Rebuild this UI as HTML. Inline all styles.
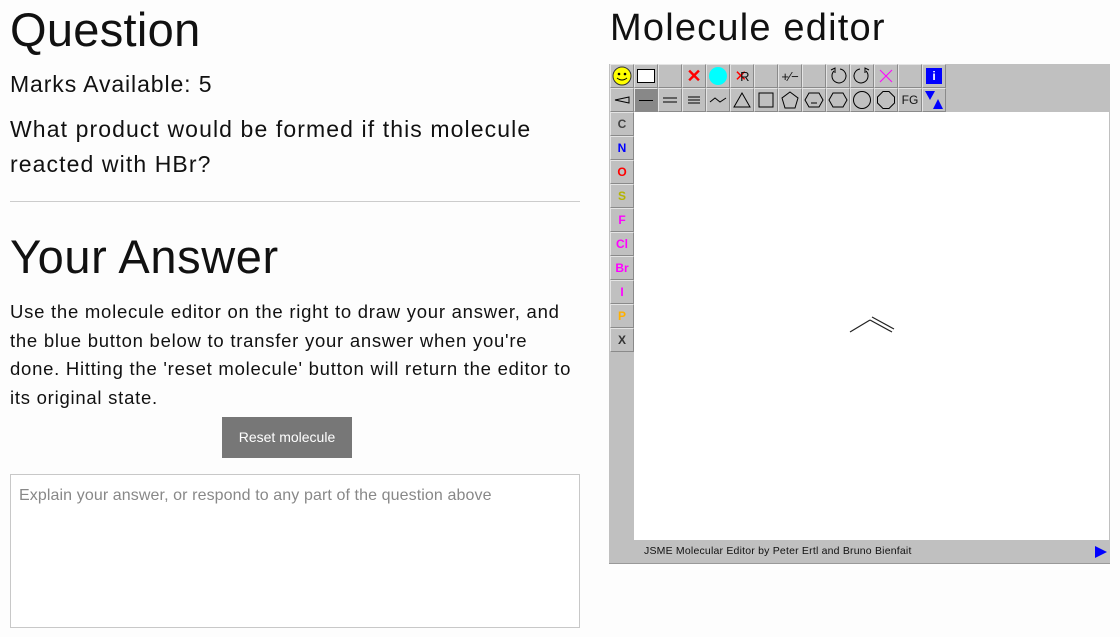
<!DOCTYPE html>
<html><head><meta charset="utf-8"><style>
body{margin:0;width:1120px;height:637px;background:#fdfdfd;font-family:"Liberation Sans",sans-serif;color:#111;position:relative;overflow:hidden}
.a{position:absolute;white-space:nowrap}
.b{position:absolute;width:22px;height:22px;background:#c0c0c0;border-top:1px solid #e4e4e4;border-left:1px solid #e4e4e4;border-right:1px solid #8a8a8a;border-bottom:1px solid #8a8a8a;box-sizing:content-box;display:flex;align-items:center;justify-content:center;font:bold 12px "Liberation Sans",sans-serif}
</style></head><body>
<div class="a" style="left:10px;top:2px;font-size:47px;letter-spacing:0.3px">Question</div>
<div class="a" style="left:10px;top:71px;font-size:23px;letter-spacing:0.9px">Marks Available: 5</div>
<div class="a" style="left:10px;top:112px;font-size:23px;line-height:35px;letter-spacing:1.1px">What product would be formed if this molecule<br>reacted with HBr?</div>
<div class="a" style="left:10px;top:201px;width:570px;height:1px;background:#ccc"></div>
<div class="a" style="left:10px;top:229px;font-size:47px;letter-spacing:0.6px">Your Answer</div>
<div class="a" style="left:10px;top:298px;font-size:18.5px;line-height:28.5px;letter-spacing:0.75px">Use the molecule editor on the right to draw your answer, and<br>the blue button below to transfer your answer when you're<br>done. Hitting the 'reset molecule' button will return the editor to<br>its original state.</div>
<div class="a" style="left:222px;top:417px;width:130px;height:41px;background:#777;color:#fff;font-size:14px;line-height:41px;text-align:center">Reset molecule</div>
<div class="a" style="left:10px;top:474px;width:568px;height:152px;border:1px solid #c8c8c8;background:#fff"></div>
<div class="a" style="left:19px;top:487px;font-size:16px;color:#888;letter-spacing:0.1px">Explain your answer, or respond to any part of the question above</div>
<div class="a" style="left:610px;top:7px;font-size:38px;letter-spacing:1.2px">Molecule editor</div>

<div class="a" style="left:609px;top:64px;width:501px;height:499px;background:#c0c0c0;border-bottom:1px solid #999"></div>
<div class="a" style="left:634px;top:112px;width:475px;height:428px;background:#fff"></div>
<div class="a" style="left:644px;top:545px;font-size:10.5px;color:#111;letter-spacing:0.2px">JSME Molecular Editor by Peter Ertl and Bruno Bienfait</div>
<svg class="a" style="left:1094px;top:545px" width="14" height="14"><polygon points="1,1 13,7 1,13" fill="#00f"/></svg>
<svg class="a" style="left:848px;top:316px" width="50" height="22"><path d="M2,16 L22,4 M22,4 L44,16 M24,1 L46,13" stroke="#222" stroke-width="1.2" fill="none"/></svg>

<div class="b" style="left:610px;top:64px"><svg width="20" height="20"><circle cx="10" cy="10" r="9" fill="#ff0" stroke="#333"/><circle cx="7" cy="8" r="1.3"/><circle cx="13" cy="8" r="1.3"/><path d="M5,12 Q10,16 15,12" stroke="#000" fill="none"/></svg></div>
<div class="b" style="left:634px;top:64px"><div style="width:16px;height:12px;background:#fff;border:1px solid #000"></div></div>
<div class="b" style="left:658px;top:64px"></div>
<div class="b" style="left:682px;top:64px;color:red;font-size:18px">✕</div>
<div class="b" style="left:706px;top:64px"><div style="width:18px;height:18px;border-radius:50%;background:#0ff"></div></div>
<div class="b" style="left:730px;top:64px;font-weight:normal;font-size:13px"><span style="color:red;font-size:15px">✕</span><span style="margin-left:-7px">R</span></div>
<div class="b" style="left:754px;top:64px"></div>
<div class="b" style="left:778px;top:64px;font-weight:normal;font-size:13px">+⁄−</div>
<div class="b" style="left:802px;top:64px"></div>
<div class="b" style="left:826px;top:64px"><svg width="20" height="20"><path d="M6,5 A7,7 0 1 0 12,3" stroke="#000" fill="none"/><path d="M3,4 L7,2 L7,7" stroke="#000" fill="none"/></svg></div>
<div class="b" style="left:850px;top:64px"><svg width="20" height="20"><path d="M14,5 A7,7 0 1 1 8,3" stroke="#000" fill="none"/><path d="M17,4 L13,2 L13,7" stroke="#000" fill="none"/></svg></div>
<div class="b" style="left:874px;top:64px"><svg width="20" height="20"><path d="M4,4 L16,16 M16,4 L4,16" stroke="#f0f"/></svg></div>
<div class="b" style="left:898px;top:64px"></div>
<div class="b" style="left:922px;top:64px"><div style="width:16px;height:16px;background:#00f;color:#fff;text-align:center;line-height:16px">i</div></div>
<div class="b" style="left:610px;top:88px"><svg width="20" height="20"><path d="M3,10 L17,7 L17,13 Z" fill="none" stroke="#000"/></svg></div>
<div class="b" style="left:634px;top:88px;background:#888"><div style="width:14px;height:1px;background:#000"></div></div>
<div class="b" style="left:658px;top:88px"><svg width="20" height="20"><path d="M3,8H17M3,12H17" stroke="#000"/></svg></div>
<div class="b" style="left:682px;top:88px"><svg width="20" height="20"><path d="M4,7H16M4,10H16M4,13H16" stroke="#000"/></svg></div>
<div class="b" style="left:706px;top:88px"><svg width="20" height="20"><path d="M2,12 L7,8 L12,12 L18,8" stroke="#000" fill="none"/></svg></div>
<div class="b" style="left:730px;top:88px"><svg width="20" height="20"><path d="M10,3 L18,17 L2,17Z" stroke="#000" fill="none"/></svg></div>
<div class="b" style="left:754px;top:88px"><svg width="20" height="20"><rect x="3" y="3" width="14" height="14" stroke="#000" fill="none"/></svg></div>
<div class="b" style="left:778px;top:88px"><svg width="20" height="20"><path d="M10,2 L18,8 L15,18 L5,18 L2,8Z" stroke="#000" fill="none"/></svg></div>
<div class="b" style="left:802px;top:88px"><svg width="20" height="20"><path d="M5,3H15L19,10L15,17H5L1,10Z" stroke="#000" fill="none"/><path d="M7,13H13" stroke="#000"/></svg></div>
<div class="b" style="left:826px;top:88px"><svg width="20" height="20"><path d="M5,3H15L19,10L15,17H5L1,10Z" stroke="#000" fill="none"/></svg></div>
<div class="b" style="left:850px;top:88px"><svg width="20" height="20"><circle cx="10" cy="10" r="8.5" stroke="#000" fill="none"/></svg></div>
<div class="b" style="left:874px;top:88px"><svg width="20" height="20"><path d="M7,1.5H13L18.5,7V13L13,18.5H7L1.5,13V7Z" stroke="#000" fill="none"/></svg></div>
<div class="b" style="left:898px;top:88px;font-weight:normal">FG</div>
<div class="b" style="left:922px;top:88px"><svg width="20" height="20"><path d="M1,1H11L6,10Z M9,19L19,19L14,9Z" fill="#00f"/></svg></div>
<div class="b" style="left:610px;top:112px;color:#444">C</div>
<div class="b" style="left:610px;top:136px;color:#00f">N</div>
<div class="b" style="left:610px;top:160px;color:#f00">O</div>
<div class="b" style="left:610px;top:184px;color:#b4b400">S</div>
<div class="b" style="left:610px;top:208px;color:#f0f">F</div>
<div class="b" style="left:610px;top:232px;color:#f0f">Cl</div>
<div class="b" style="left:610px;top:256px;color:#f0f">Br</div>
<div class="b" style="left:610px;top:280px;color:#f0f">I</div>
<div class="b" style="left:610px;top:304px;color:#ffb000">P</div>
<div class="b" style="left:610px;top:328px;color:#333">X</div>
</body></html>
